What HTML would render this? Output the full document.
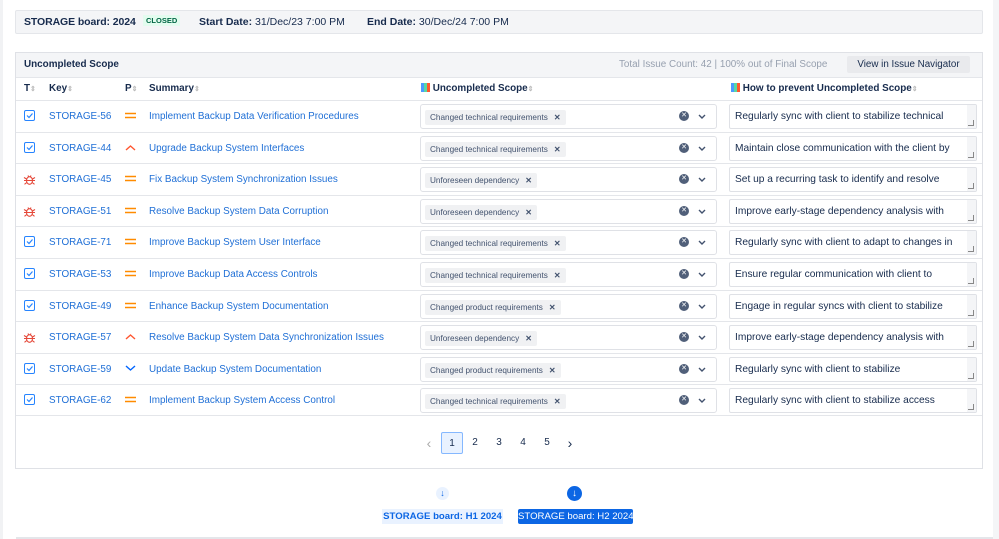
<!DOCTYPE html>
<html><head><meta charset="utf-8"><style>
*{box-sizing:border-box;margin:0;padding:0}
body{width:999px;height:539px;overflow:hidden;background:#fff;font-family:"Liberation Sans",sans-serif;color:#172b4d;position:relative;font-size:9.9px}
.a{position:absolute;white-space:nowrap}
.lnk{color:#1f6fd6}
.hdr{left:15px;top:10px;width:968px;height:24px;background:#f4f5f7;border:1px solid #e4e6ea;border-radius:2px}
.panel{left:15px;top:52px;width:968px;height:417px;border:1px solid #dfe1e6}
.row{position:absolute;left:0;width:966px;height:32px;border-top:1px solid #e4e6ea}
.sel{position:absolute;left:404px;top:3px;width:297px;height:25px;border:1px solid #dfe1e6;border-radius:3px;background:#fff}
.tag{position:absolute;left:4px;top:5px;height:15px;background:#f0f1f3;font-size:8.2px;line-height:15px;padding:0 5px;color:#42526e;border-radius:2px}
.tag b{margin-left:6px;font-size:8px}
.ta{position:absolute;left:713px;top:3px;width:248px;height:25px;border:1px solid #dfe1e6;border-radius:2px;font-size:10.2px;line-height:24px;padding-left:5px;color:#172b4d;overflow:hidden;white-space:nowrap}
.ta:after{content:"";position:absolute;right:2px;bottom:2px;width:5px;height:5px;border-right:1px solid #888;border-bottom:1px solid #888}
.ta:before{content:"";position:absolute;right:0;top:0;width:9px;height:24px;background:#f4f5f7}
.pg{position:absolute;top:432px;width:22px;height:22px;text-align:center;line-height:22px;font-size:10px}
</style></head><body>
<div class="a" style="left:0;top:0;width:3px;height:539px;background:#f1f2f4"></div>
<div class="a" style="left:993px;top:0;width:6px;height:539px;background:#f4f5f7"></div>
<div class="a" style="left:16px;top:537px;width:977px;height:2px;background:#e4e6ea"></div>
<div class="a hdr">
 <span class="a" style="left:8px;top:5px;font-weight:bold;font-size:10.5px;letter-spacing:-0.1px">STORAGE board: 2024</span>
 <span class="a" style="left:127px;top:4px;background:#e3fcef;color:#006644;font-size:7.5px;font-weight:bold;padding:1px 3px">CLOSED</span>
 <span class="a" style="left:183px;top:5px;font-size:10.5px"><b>Start Date:</b> 31/Dec/23 7:00 PM</span>
 <span class="a" style="left:351px;top:5px;font-size:10.5px"><b>End Date:</b> 30/Dec/24 7:00 PM</span>
</div>
<div class="a panel">
 <div class="a" style="left:0;top:0;width:966px;height:24px;background:#f4f5f7"></div>
 <span class="a" style="left:8px;top:6px;font-weight:bold">Uncompleted Scope</span>
 <span class="a" style="left:603px;top:6px;color:#97a0af">Total Issue Count: 42 | 100% out of Final Scope</span>
 <span class="a" style="left:831px;top:3px;width:123px;height:17px;background:#e9eaed;border-radius:2px;text-align:center;line-height:17px;font-size:9.8px">View in Issue Navigator</span>
 <div class="a" style="left:0;top:24px;width:966px;height:23px;border-top:1px solid #e4e6ea;font-weight:bold">
  <span class="a" style="left:8px;top:5px">T<span style="color:#bbb;font-size:7px">⇕</span></span>
  <span class="a" style="left:33px;top:5px">Key<span style="color:#bbb;font-size:7px">⇕</span></span>
  <span class="a" style="left:109px;top:5px">P<span style="color:#bbb;font-size:7px">⇕</span></span>
  <span class="a" style="left:133px;top:5px">Summary<span style="color:#bbb;font-size:7px">⇕</span></span>
  <span class="a" style="left:405px;top:5px"><span style="display:inline-block;width:9px;height:9px;background:linear-gradient(90deg,#4c9aff 33%,#57d9a3 33% 66%,#ff5630 66%);vertical-align:-1px"></span> Uncompleted Scope<span style="color:#bbb;font-size:7px">⇕</span></span>
  <span class="a" style="left:715px;top:5px"><span style="display:inline-block;width:9px;height:9px;background:linear-gradient(90deg,#4c9aff 33%,#57d9a3 33% 66%,#ff5630 66%);vertical-align:-1px"></span> How to prevent Uncompleted Scope<span style="color:#bbb;font-size:7px">⇕</span></span>
 </div>
 <div id="rows"></div>
 <div class="a" style="left:0;top:362px;width:966px;border-top:1px solid #e4e6ea"></div>
</div>
<span class="pg" style="left:418px;color:#aaa;font-size:14px">‹</span>
<span class="pg" style="left:441px;border:1px solid #85b8ff;background:#e9f2ff;border-radius:2px">1</span>
<span class="pg" style="left:464px">2</span>
<span class="pg" style="left:488px">3</span>
<span class="pg" style="left:512px">4</span>
<span class="pg" style="left:536px">5</span>
<span class="pg" style="left:559px;font-size:14px">›</span>
<span class="a" style="left:436px;top:487px;width:13px;height:13px;border-radius:50%;background:#e9f2ff;color:#0c66e4;font-size:9px;text-align:center;line-height:13px;font-weight:bold">↓</span>
<span class="a" style="left:567px;top:486px;width:15px;height:15px;border-radius:50%;background:#0c66e4;color:#fff;font-size:10px;text-align:center;line-height:15px;font-weight:bold">↓</span>
<span class="a" style="left:382px;top:509px;width:121px;height:15px;line-height:15px;text-align:center;background:#e9f2ff;color:#0c66e4;font-weight:bold;font-size:9.6px">STORAGE board: H1 2024</span>
<span class="a" style="left:518px;top:509px;width:115px;height:15px;line-height:15px;text-align:center;background:#0c66e4;color:#fff;font-size:9.6px;border-radius:2px">STORAGE board: H2 2024</span>
<script>
var d=[["s","56","m","Implement Backup Data Verification Procedures","Changed technical requirements","Regularly sync with client to stabilize technical"],
["s","44","h","Upgrade Backup System Interfaces","Changed technical requirements","Maintain close communication with the client by"],
["b","45","m","Fix Backup System Synchronization Issues","Unforeseen dependency","Set up a recurring task to identify and resolve"],
["b","51","m","Resolve Backup System Data Corruption","Unforeseen dependency","Improve early-stage dependency analysis with"],
["s","71","m","Improve Backup System User Interface","Changed technical requirements","Regularly sync with client to adapt to changes in"],
["s","53","m","Improve Backup Data Access Controls","Changed technical requirements","Ensure regular communication with client to"],
["s","49","m","Enhance Backup System Documentation","Changed product requirements","Engage in regular syncs with client to stabilize"],
["b","57","h","Resolve Backup System Data Synchronization Issues","Unforeseen dependency","Improve early-stage dependency analysis with"],
["s","59","l","Update Backup System Documentation","Changed product requirements","Regularly sync with client to stabilize"],
["s","62","m","Implement Backup System Access Control","Changed technical requirements","Regularly sync with client to stabilize access"]];
var h="";
var bug='<svg class="a" style="left:7px;top:9px" width="13" height="13" viewBox="0 0 13 13"><ellipse cx="6.5" cy="7.5" rx="3" ry="3.8" fill="none" stroke="#e5493a" stroke-width="1.1"/><path d="M3.5 7.5h6M5 2.5l.8 1.5M8 2.5l-.8 1.5M3.5 6l-2.5-1.5M9.5 6l2.5-1.5M3.5 7.5H1M9.5 7.5H12M3.8 9.5l-2.3 1.8M9.2 9.5l2.3 1.8" stroke="#e5493a" stroke-width="1.1" fill="none"/></svg>';
d.forEach(function(r,i){
var t=r[0]=="s"?'<svg class="a" style="left:8px;top:9px" width="11" height="11" viewBox="0 0 11 11"><rect x=".5" y=".5" width="10" height="10" rx="1.5" fill="none" stroke="#2684ff"/><path d="M3 5.5l2 2 3.5-4" fill="none" stroke="#2684ff" stroke-width="1.2"/></svg>':bug;
var p=r[2]=="m"?'<svg class="a" style="left:109px;top:11px" width="11" height="8"><path d="M0 1.5h11M0 5.5h11" stroke="#ff8b00" stroke-width="1.6"/></svg>':r[2]=="h"?'<svg class="a" style="left:109px;top:11px" width="11" height="7"><path d="M1 6l4.5-4 4.5 4" fill="none" stroke="#ff5630" stroke-width="1.4"/></svg>':'<svg class="a" style="left:109px;top:11px" width="11" height="7"><path d="M1 1l4.5 4 4.5-4" fill="none" stroke="#0065ff" stroke-width="1.4"/></svg>';
h+='<div class="row" style="top:'+(47+i*31.6)+'px">'+t+'<span class="a lnk" style="left:33px;top:10px">STORAGE-'+r[1]+'</span>'+p+'<span class="a lnk" style="left:133px;top:10px">'+r[3]+'</span><div class="sel"><span class="tag">'+r[4]+'<b>✕</b></span><span class="a" style="left:258px;top:6px;width:10px;height:10px;border-radius:50%;background:#505f79;color:#fff;font-size:7px;line-height:10px;text-align:center">✕</span><svg class="a" style="left:277px;top:9px" width="8" height="6"><path d="M1 1l3 3 3-3" fill="none" stroke="#42526e" stroke-width="1.4"/></svg></div><div class="ta">'+r[5]+'</div></div>';
});
document.getElementById("rows").innerHTML=h;
</script>
</body></html>
